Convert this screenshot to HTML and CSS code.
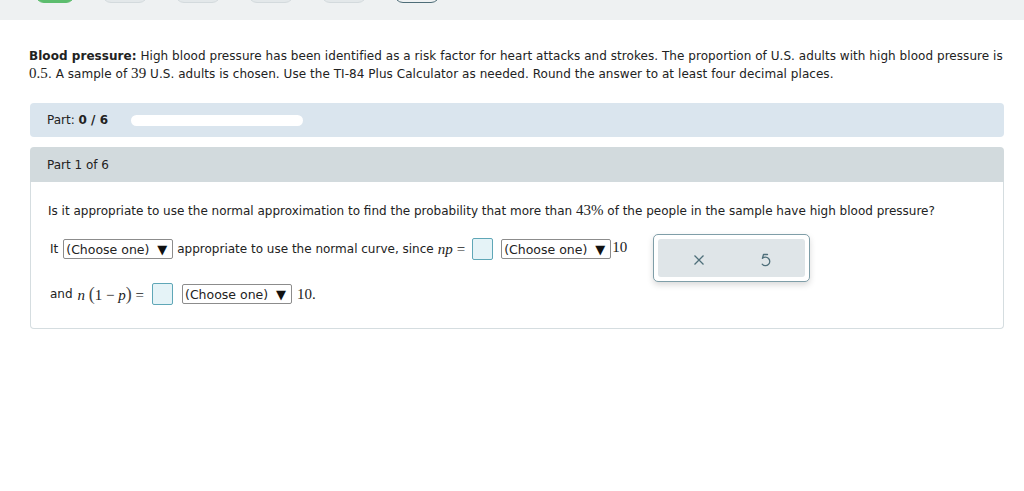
FILE: index.html
```html
<!DOCTYPE html>
<html>
<head>
<meta charset="utf-8">
<link rel="stylesheet" href="styles.css">
</head>
<body>
<div class="topbar">
  <div class="tabs">
    <span class="tab tab-done"></span>
    <span class="tab"></span>
    <span class="tab"></span>
    <span class="tab"></span>
    <span class="tab"></span>
    <span class="tab tab-current"></span>
  </div>
</div>
<main class="content">
  <p class="problem"><b>Blood pressure:</b> High blood pressure has been identified as a risk factor for heart attacks and strokes. The proportion of U.S. adults with high blood pressure is <span class="m">0.5</span>. A sample of <span class="m">39</span> U.S. adults is chosen. Use the TI-84 Plus Calculator as needed. Round the answer to at least four decimal places.</p>

  <div class="progress">
    <span>Part: <b>0 / 6</b></span>
    <span class="bar"></span>
  </div>

  <section class="part">
    <header class="part-head">Part 1 of 6</header>
    <div class="part-body">
      <p class="question">Is it appropriate to use the normal approximation to find the probability that more than <span class="m">43%</span> of the people in the sample have high blood pressure?</p>
      <div class="answer-area">
        <div class="answer-lines">
          <div class="line">
            <span>It</span>
            <span class="select">(Choose one)<span class="arrow">▼</span></span>
            <span>appropriate to use the normal curve, since</span>
            <span class="m mi">np</span><span class="m">=</span>
            <span class="box"></span>
            <span class="select">(Choose one)<span class="arrow">▼</span></span><span class="m ten">10</span>
          </div>
          <div class="line line2">
            <span>and</span>
            <span class="m"><i>n</i> <span class="paren">(</span>1 − <i>p</i><span class="paren">)</span> =</span>
            <span class="box"></span>
            <span class="select">(Choose one)<span class="arrow">▼</span></span>
            <span class="m">10.</span>
          </div>
        </div>
        <div class="tools">
          <div class="tools-inner">
            <svg class="icon" width="14" height="14" viewBox="0 0 14 14"><path d="M2.5 2.5 L11.5 11.5 M11.5 2.5 L2.5 11.5" stroke="#4f6f7a" stroke-width="1.3" fill="none"/></svg>
            <svg class="icon" width="12" height="16" viewBox="0 0 12 16"><path d="M8.5 2.5 H4.5 L3.4 6.4 A4.3 4.3 0 1 1 3.2 12.2" stroke="#4f6f7a" stroke-width="1.3" fill="none" stroke-linejoin="round" stroke-linecap="round"/></svg>
          </div>
        </div>
      </div>
    </div>
  </section>
</main>
</body>
</html>
```

FILE: styles.css
```css
* { box-sizing: border-box; }
html, body { margin: 0; padding: 0; background: #fff; }
body {
  font-family: "DejaVu Sans", Verdana, sans-serif;
  font-size: 12px;
  color: #222;
}
.topbar {
  height: 20px;
  background: #eef1f2;
  overflow: hidden;
}
.tabs {
  display: flex;
  gap: 27px;
  padding-left: 35px;
  margin-top: -30px;
}
.tab {
  display: block;
  width: 46px;
  height: 33px;
  border-radius: 9px;
  background: #e3e8ea;
  border: 1px solid #d3dadd;
}
.tab-done { width: 40px; background: #5cbd6e; border-color: #5cbd6e; }
.tab-current { background: #eef1f2; border: 1.5px solid #4e6d78; }
.content { padding: 0 20px 0 29px; }
.problem {
  margin: 27px 0 0;
  line-height: 18px;
  font-size: 12px;
  letter-spacing: 0.05px;
}
.problem b { font-weight: bold; }
.m { font-family: "Liberation Serif", "Times New Roman", serif; font-size: 15px; line-height: 1; }
.mi { font-style: italic; }
.progress {
  margin-top: 20px;
  margin-left: 1px;
  height: 34px;
  background: #dae5ee;
  border-radius: 4px;
  display: flex;
  align-items: center;
  padding-left: 17px;
  gap: 23px;
}
.bar {
  width: 172px;
  height: 11px;
  background: #fff;
  border-radius: 6px;
}
.part {
  margin-top: 10px;
  margin-left: 1px;
}
.part-head {
  height: 35px;
  background: #d2dadd;
  border-radius: 4px 4px 0 0;
  padding-left: 17px;
  display: flex;
  align-items: center;
}
.part-body {
  border: 1px solid #d5dde0;
  border-top: none;
  border-radius: 0 0 4px 4px;
  padding: 21px 17px 21px 17px;
  height: 147px;
}
.question { margin: 0; line-height: 16px; }
.answer-area {
  display: flex;
  align-items: flex-start;
  margin-top: 19px;
}
.answer-lines { display: flex; flex-direction: column; gap: 23px; padding-left: 2px; }
.line { display: flex; align-items: center; gap: 4px; height: 22px; white-space: nowrap; }
.select {
  display: inline-flex;
  align-items: center;
  justify-content: space-between;
  width: 110px;
  height: 20px;
  border: 1px solid #8c8c8c;
  border-radius: 2px;
  padding: 0 5px 0 2px;
  background: #fff;
  font-size: 12.5px;
  margin-left: 1px;
}
.arrow { font-size: 13px; color: #111; }
.box {
  display: inline-block;
  width: 21px;
  height: 22px;
  border: 1px solid #5fa7b7;
  border-radius: 2px;
  background: #e5f3f7;
  margin: 0 3px;
}
.ten { margin-left: -3px; position: relative; top: -2px; }
.paren { font-size: 18px; color: #444; }
.line2 { gap: 5px; }
.tools {
  margin-left: 26px;
  margin-top: -4px;
  width: 157px;
  height: 48px;
  border: 1px solid #7f9ea8;
  border-radius: 5px;
  padding: 4px;
  box-shadow: 0 3px 6px rgba(0,0,0,0.15);
  background: #fff;
}
.tools-inner {
  height: 100%;
  background: #dfe5e8;
  border-radius: 3px;
  display: flex;
  align-items: center;
  justify-content: space-around;
  padding: 4px 8px 0;
}
```
